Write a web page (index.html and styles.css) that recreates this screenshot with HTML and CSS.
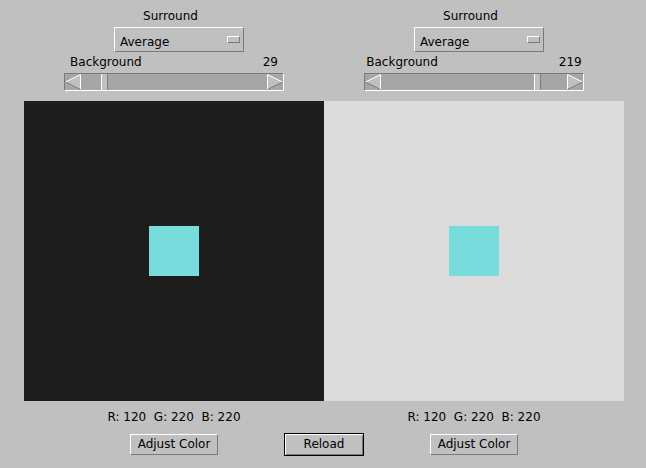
FILE: index.html
```html
<!DOCTYPE html>
<html lang="en">
<head>
    <meta charset="UTF-8">
    <title>Surround Colour Demo</title>
    <link rel="stylesheet" href="styles.css">
</head>
<body>

<div class="app">
    <!-- controls for both views -->
    <div class="controls">
        <div class="panel-controls">
            <div class="title">Surround</div>
            <div class="dropdown">
                <span class="dropdown-value">Average</span>
                <span class="dropdown-mark"></span>
            </div>
            <div class="value-row">
                <span>Background</span>
                <span>29</span>
            </div>
            <div class="slider">
                <svg class="slider-arrow" viewBox="0 0 16 16" width="16" height="16">
                    <polygon points="0.5,8 15.5,0.5 15.5,15.5" fill="#c0c0c0"/>
                    <path d="M0.5 8 L15.5 0.5 V15.5" stroke="#ffffff" fill="none"/>
                    <path d="M0.5 8 L15.5 15.5" stroke="#7a7a7a" fill="none"/>
                </svg>
                <div class="slider-track">
                    <div class="slider-thumb" style="left: 20px"></div>
                </div>
                <svg class="slider-arrow" viewBox="0 0 16 16" width="16" height="16">
                    <polygon points="0.5,0.5 15.5,8 0.5,15.5" fill="#c0c0c0"/>
                    <path d="M0.5 15.5 V0.5 L15.5 8" stroke="#ffffff" fill="none"/>
                    <path d="M15.5 8 L0.5 15.5" stroke="#7a7a7a" fill="none"/>
                </svg>
            </div>
        </div>

        <div class="panel-controls">
            <div class="title">Surround</div>
            <div class="dropdown">
                <span class="dropdown-value">Average</span>
                <span class="dropdown-mark"></span>
            </div>
            <div class="value-row">
                <span>Background</span>
                <span>219</span>
            </div>
            <div class="slider">
                <svg class="slider-arrow" viewBox="0 0 16 16" width="16" height="16">
                    <polygon points="0.5,8 15.5,0.5 15.5,15.5" fill="#c0c0c0"/>
                    <path d="M0.5 8 L15.5 0.5 V15.5" stroke="#ffffff" fill="none"/>
                    <path d="M0.5 8 L15.5 15.5" stroke="#7a7a7a" fill="none"/>
                </svg>
                <div class="slider-track">
                    <div class="slider-thumb" style="left: 153px"></div>
                </div>
                <svg class="slider-arrow" viewBox="0 0 16 16" width="16" height="16">
                    <polygon points="0.5,0.5 15.5,8 0.5,15.5" fill="#c0c0c0"/>
                    <path d="M0.5 15.5 V0.5 L15.5 8" stroke="#ffffff" fill="none"/>
                    <path d="M15.5 8 L0.5 15.5" stroke="#7a7a7a" fill="none"/>
                </svg>
            </div>
        </div>
    </div>

    <!-- the two views -->
    <div class="canvas">
        <div class="view view-dark"><div class="swatch"></div></div>
        <div class="view view-light"><div class="swatch"></div></div>
    </div>

    <div class="readouts">
        <div>R: 120&nbsp;&nbsp;G: 220&nbsp;&nbsp;B: 220</div>
        <div>R: 120&nbsp;&nbsp;G: 220&nbsp;&nbsp;B: 220</div>
    </div>

    <div class="buttons">
        <button class="btn">Adjust Color</button>
        <button class="btn btn-default">Reload</button>
        <button class="btn">Adjust Color</button>
    </div>
</div>

</body>
</html>
```

FILE: styles.css
```css
body {
    margin: 0;
    background-color: #c0c0c0;
    font-family: "DejaVu Sans", sans-serif;
    font-size: 12px;
    color: #000;
}
.app {
    width: 600px;
    margin-left: 24px;
    padding-top: 9px;
}
.controls {
    display: grid;
    grid-template-columns: 300px 300px;
}
.panel-controls {
    display: flex;
    flex-direction: column;
}
.title {
    line-height: 14px;
    text-align: center;
    padding-right: 7px;
}
.dropdown {
    margin: 4px 0 0 90px;
    width: 130px;
    height: 25px;
    box-sizing: border-box;
    border: 1px solid;
    border-color: #fff #7a7a7a #7a7a7a #fff;
    display: flex;
    align-items: flex-start;
    padding: 7px 3px 0 5px;
}
.dropdown-value {
    flex: 1;
    line-height: 14px;
}
.dropdown-mark {
    width: 13px;
    height: 7px;
    margin-top: 1px;
    box-sizing: border-box;
    border: 1px solid;
    border-color: #fff #7a7a7a #7a7a7a #fff;
}
.value-row {
    display: flex;
    justify-content: center;
    gap: 121px;
    margin-top: 3px;
    line-height: 14px;
}
.slider {
    margin: 4px 0 0 40px;
    width: 220px;
    height: 18px;
    box-sizing: border-box;
    border: 1px solid;
    border-color: #7a7a7a #fff #fff #7a7a7a;
    background-color: #a6a6a6;
    display: flex;
}
.slider-arrow {
    display: block;
    width: 16px;
    height: 16px;
}
.slider-track {
    flex: 1;
    position: relative;
}
.slider-thumb {
    position: absolute;
    top: 0;
    width: 7px;
    height: 16px;
    box-sizing: border-box;
    border-left: 1px solid #fff;
    border-right: 1px solid #7a7a7a;
    background-color: #c0c0c0;
}
.canvas {
    display: flex;
    margin-top: 10px;
}
.view {
    width: 300px;
    height: 300px;
    display: flex;
    align-items: center;
    justify-content: center;
}
.view-dark {
    background-color: #1d1d1d;
}
.view-light {
    background-color: #dbdbdb;
}
.swatch {
    width: 50px;
    height: 50px;
    background-color: #78dcdc;
}
.readouts {
    display: grid;
    grid-template-columns: 300px 300px;
    margin-top: 9px;
    line-height: 14px;
    text-align: center;
}
.buttons {
    display: flex;
    justify-content: center;
    align-items: center;
    gap: 66px;
    margin-top: 9px;
}
.btn {
    width: 88px;
    height: 21px;
    box-sizing: border-box;
    padding: 0;
    border: 1px solid;
    border-color: #fff #7a7a7a #7a7a7a #fff;
    background-color: #c0c0c0;
    font: inherit;
    color: #000;
    line-height: 19px;
}
.btn-default {
    width: 80px;
    height: 23px;
    border: 1px solid #000;
    box-shadow: inset 1px 1px 0 #fff, inset -1px -1px 0 #7a7a7a;
}
```
